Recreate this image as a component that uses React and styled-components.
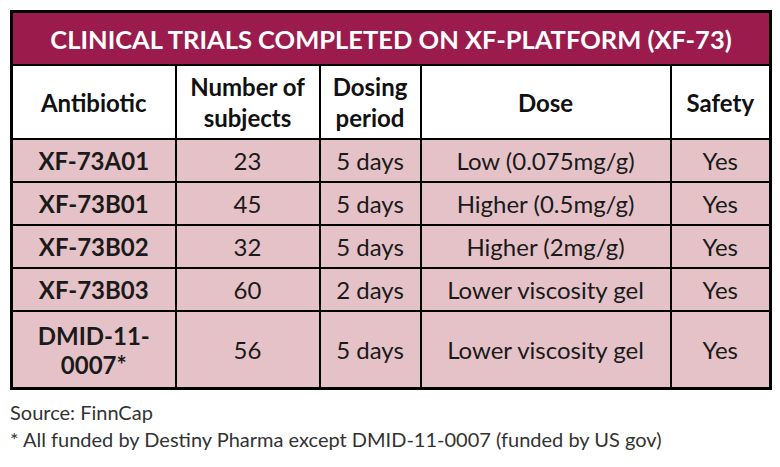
import React from 'react';
import styled, { createGlobalStyle } from 'styled-components';

const GlobalStyle = createGlobalStyle`
  body {
    margin: 0;
    background: #ffffff;
    font-family: Lato, "Open Sans", sans-serif;
  }
`

const Page = styled.div`
  padding: 10px 0 0 10px;
  width: 780px;
  height: 467px;
  box-sizing: border-box;
`

const Table = styled.table`
  border-collapse: collapse;
  table-layout: fixed;
  width: 759px;
  border: 3px solid #000;
`

const TitleCell = styled.th`
  background: #9c1b4d;
  color: #fff;
  font-size: 25.5px;
  font-weight: 700;
  height: 51px;
  padding: 0;
  border: 2px solid #000;
`

const HeadCell = styled.th`
  background: #fff;
  color: #111;
  font-size: 24px;
  font-weight: 700;
  line-height: 31px;
  height: 72px;
  padding: 0 2px;
  border: 2px solid #000;
`

const Cell = styled.td`
  background: #e4c2c8;
  color: #1a1a1a;
  font-size: 24px;
  font-weight: ${p => (p.bold ? 700 : 400)};
  line-height: 29px;
  text-align: center;
  height: ${p => (p.tall ? '75px' : '41px')};
  padding: 0 2px;
  border: 2px solid #000;
`

const Notes = styled.div`
  margin-top: 9px;
  color: #333;
  font-size: 20px;
  line-height: 27px;
`

const rows = [
  ['XF-73A01', '23', '5 days', 'Low (0.075mg/g)', 'Yes'],
  ['XF-73B01', '45', '5 days', 'Higher (0.5mg/g)', 'Yes'],
  ['XF-73B02', '32', '5 days', 'Higher (2mg/g)', 'Yes'],
  ['XF-73B03', '60', '2 days', 'Lower viscosity gel', 'Yes'],
  ['DMID-11-0007*', '56', '5 days', 'Lower viscosity gel', 'Yes'],
];

export default function App() {
  return (
    <Page>
      <GlobalStyle />
      <Table>
        <colgroup>
          <col style={{ width: 164 }} />
          <col style={{ width: 144 }} />
          <col style={{ width: 101 }} />
          <col style={{ width: 250 }} />
          <col style={{ width: 100 }} />
        </colgroup>
        <thead>
          <tr>
            <TitleCell colSpan={5}>CLINICAL TRIALS COMPLETED ON XF-PLATFORM (XF-73)</TitleCell>
          </tr>
          <tr>
            <HeadCell>Antibiotic</HeadCell>
            <HeadCell>Number of subjects</HeadCell>
            <HeadCell>Dosing period</HeadCell>
            <HeadCell>Dose</HeadCell>
            <HeadCell>Safety</HeadCell>
          </tr>
        </thead>
        <tbody>
          {rows.map((r, i) => {
            const tall = i === rows.length - 1;
            return (
              <tr key={r[0]}>
                <Cell bold tall={tall}>{tall ? <>DMID-11-<br />0007*</> : r[0]}</Cell>
                <Cell tall={tall}>{r[1]}</Cell>
                <Cell tall={tall}>{r[2]}</Cell>
                <Cell tall={tall}>{r[3]}</Cell>
                <Cell tall={tall}>{r[4]}</Cell>
              </tr>
            );
          })}
        </tbody>
      </Table>
      <Notes>
        Source: FinnCap
        <br />
        * All funded by Destiny Pharma except DMID-11-0007 (funded by US gov)
      </Notes>
    </Page>
  );
}
